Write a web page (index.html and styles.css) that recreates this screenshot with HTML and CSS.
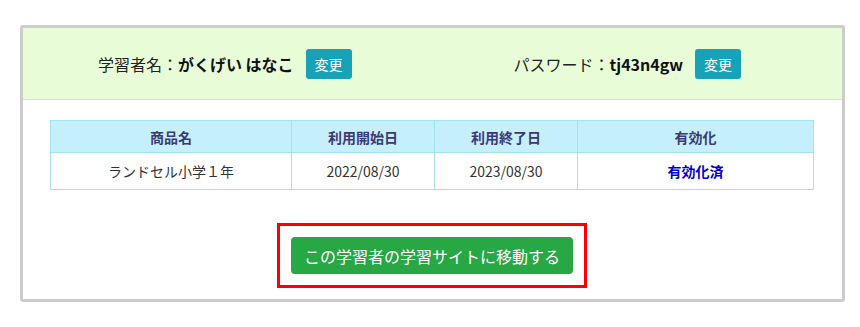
FILE: index.html
```html
<!DOCTYPE html>
<html lang="ja">
<head>
  <meta charset="UTF-8">
  <meta name="viewport" content="width=device-width, initial-scale=1.0">
  <title>学習者情報</title>
  <link rel="stylesheet" href="styles.css">
</head>
<body>
  <div class="card">
    <div class="card-header">
      <div class="info">
        <span class="label">学習者名：</span><span class="value">がくげい はなこ</span>
        <button class="change-button">変更</button>
      </div>
      <div class="info info-right">
        <span class="label">パスワード：</span><span class="value">tj43n4gw</span>
        <button class="change-button">変更</button>
      </div>
    </div>
    <div class="card-body">
      <table class="product-table">
        <thead>
          <tr>
            <th class="col-name">商品名</th>
            <th class="col-date">利用開始日</th>
            <th class="col-date">利用終了日</th>
            <th>有効化</th>
          </tr>
        </thead>
        <tbody>
          <tr>
            <td>ランドセル小学１年</td>
            <td>2022/08/30</td>
            <td>2023/08/30</td>
            <td class="active">有効化済</td>
          </tr>
        </tbody>
      </table>
      <div class="site-link">
        <button class="go-button">この学習者の学習サイトに移動する</button>
      </div>
    </div>
  </div>
</body>
</html>
```

FILE: styles.css
```css
body {
    font-family: "Noto Sans CJK JP", "Noto Sans", sans-serif;
    background-color: #fff;
    margin: 0;
    padding: 25px 15px 0 20px;
    color: #222;
}
.card {
    width: 819px;
    border: 3px solid #cccccc;
    border-radius: 3px;
}
.card-header {
    display: grid;
    grid-template-columns: 1fr 1fr;
    align-items: center;
    height: 71px;
    background: #e8fdd7;
    border-bottom: 1px solid #dcdcd8;
}
.info {
    display: flex;
    align-items: center;
    justify-content: center;
    font-size: 16px;
    line-height: 20px;
    padding-right: 6px;
}
.info-right {
    padding-right: 20px;
}
.label {
    color: #222;
}
.value {
    font-weight: bold;
    color: #111;
}
.change-button {
    margin-left: 12px;
    width: 46px;
    height: 30px;
    padding: 0;
    border: none;
    border-radius: 3px;
    background: #17a2b8;
    color: #fff;
    font-family: inherit;
    font-size: 14px;
    cursor: pointer;
}
.card-body {
    padding: 20px 28px 11px 27px;
}
.product-table {
    width: 764px;
    border-collapse: collapse;
    font-size: 14px;
    line-height: 18px;
}
.product-table th,
.product-table td {
    border: 1px solid #a3e2f3;
    text-align: center;
    padding: 0;
}
.product-table th {
    height: 31px;
    background: #c6effc;
    color: #3a3a70;
    font-weight: bold;
}
.product-table td {
    height: 36px;
    color: #333;
}
.col-name {
    width: 240px;
}
.col-date {
    width: 142px;
}
.product-table td.active {
    color: #0000cc;
    font-weight: bold;
}
.site-link {
    width: 282px;
    margin: 33px auto 0;
    padding: 11px;
    border: 3px solid #ff0000;
}
.go-button {
    display: block;
    width: 282px;
    height: 37px;
    padding: 0;
    border: none;
    border-radius: 4px;
    background: #28a745;
    color: #fff;
    font-family: inherit;
    font-size: 16px;
    cursor: pointer;
}
```
